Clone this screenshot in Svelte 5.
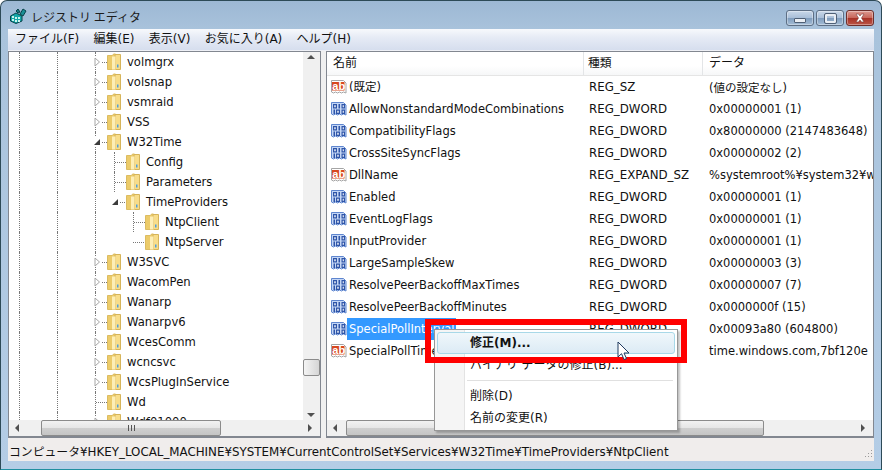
<script>
	const treeRows = [
		{ name: 'volmgrx', level: 4, kind: 'closed', guides: [0, 2] },
		{ name: 'volsnap', level: 4, kind: 'closed', guides: [0, 2] },
		{ name: 'vsmraid', level: 4, kind: 'closed', guides: [0, 2] },
		{ name: 'VSS', level: 4, kind: 'closed', guides: [0, 2] },
		{ name: 'W32Time', level: 4, kind: 'open', guides: [0, 2] },
		{ name: 'Config', level: 5, kind: 'leaf', guides: [0, 2, 4] },
		{ name: 'Parameters', level: 5, kind: 'leaf', guides: [0, 2, 4] },
		{ name: 'TimeProviders', level: 5, kind: 'open', guides: [0, 2, 4], last: true },
		{ name: 'NtpClient', level: 6, kind: 'leaf', guides: [0, 2, 4] },
		{ name: 'NtpServer', level: 6, kind: 'leaf', guides: [0, 2, 4], last: true },
		{ name: 'W3SVC', level: 4, kind: 'closed', guides: [0, 2] },
		{ name: 'WacomPen', level: 4, kind: 'closed', guides: [0, 2] },
		{ name: 'Wanarp', level: 4, kind: 'closed', guides: [0, 2] },
		{ name: 'Wanarpv6', level: 4, kind: 'closed', guides: [0, 2] },
		{ name: 'WcesComm', level: 4, kind: 'closed', guides: [0, 2] },
		{ name: 'wcncsvc', level: 4, kind: 'closed', guides: [0, 2] },
		{ name: 'WcsPlugInService', level: 4, kind: 'closed', guides: [0, 2] },
		{ name: 'Wd', level: 4, kind: 'leaf', guides: [0, 2] },
		{ name: 'Wdf01000', level: 4, kind: 'closed', guides: [0, 2] }
	];

	const values = [
		['ab', '(既定)', 'REG_SZ', '(値の設定なし)'],
		['bin', 'AllowNonstandardModeCombinations', 'REG_DWORD', '0x00000001 (1)'],
		['bin', 'CompatibilityFlags', 'REG_DWORD', '0x80000000 (2147483648)'],
		['bin', 'CrossSiteSyncFlags', 'REG_DWORD', '0x00000002 (2)'],
		['ab', 'DllName', 'REG_EXPAND_SZ', '%systemroot%¥system32¥w32time.dll'],
		['bin', 'Enabled', 'REG_DWORD', '0x00000001 (1)'],
		['bin', 'EventLogFlags', 'REG_DWORD', '0x00000001 (1)'],
		['bin', 'InputProvider', 'REG_DWORD', '0x00000001 (1)'],
		['bin', 'LargeSampleSkew', 'REG_DWORD', '0x00000003 (3)'],
		['bin', 'ResolvePeerBackoffMaxTimes', 'REG_DWORD', '0x00000007 (7)'],
		['bin', 'ResolvePeerBackoffMinutes', 'REG_DWORD', '0x0000000f (15)'],
		['bin', 'SpecialPollInterval', 'REG_DWORD', '0x00093a80 (604800)'],
		['ab', 'SpecialPollTimeRemaining', 'REG_MULTI_SZ', 'time.windows.com,7bf120e']
	];

	const menus = ['ファイル(F)', '編集(E)', '表示(V)', 'お気に入り(A)', 'ヘルプ(H)'];
	const cells = [0, 1, 2, 3, 4, 5];
</script>

<div class="window">
	<header class="titlebar">
		<svg class="app-icon" width="17" height="16" viewBox="0 0 17 16" aria-hidden="true">
			<path d="M.5 8 6 5l6 3v5l-6 2.500L.5 13z" fill="#15a6a6" stroke="#08424a" />
			<path d="M2 8h2v2H2zM5 9h2v2H5zM2 11h2v2H2zM5 12h2v2H5zM8 9h2v2H8zM8 12h2v2H8z" fill="#c9f4ee" />
			<path d="m10 6 3-5 3 2-3 5z" fill="#1b8e94" stroke="#08424a" />
			<path d="m8 1 2 3-2 1-2-2z" fill="#17787f" stroke="#08424a" />
		</svg>
		<span class="title">レジストリ エディタ</span>
		<div class="controls">
			<span class="ctl"><i class="min"></i></span>
			<span class="ctl"><i class="max"></i></span>
			<span class="ctl close">
				<svg width="14" height="10" viewBox="0 0 14 10" aria-hidden="true">
					<path d="M3 1h2.500L7 3l1.500-2H11L8.500 5 11 9H8.500L7 7 5.500 9H3l2.500-4z" fill="#fff" stroke="#7b3a36" stroke-width="0.6" />
				</svg>
			</span>
		</div>
	</header>

	<div class="client">
		<nav class="menubar">
			{#each menus as menu}
				<span>{menu}</span>
			{/each}
		</nav>

		<div class="panes">
			<section class="pane tree-pane">
				<div class="tree-body">
					<div class="tree">
						{#each treeRows as row}
							<div class="tree-row">
								<span class="lead"></span>
								{#each cells.slice(0, row.level) as c}
									<span class="cell" class:guide={row.guides.includes(c)}></span>
								{/each}
								<span class="cell node" class:last={row.last}>
									<span class="hline"></span>
									{#if row.kind === 'closed'}
										<svg class="twist" width="7" height="10" viewBox="0 0 7 10" aria-hidden="true">
											<path d="M1 1v8l4.500-4z" fill="#fff" stroke="#a6a6a6" />
										</svg>
									{:else if row.kind === 'open'}
										<svg class="twist" width="7" height="10" viewBox="0 0 7 10" aria-hidden="true">
											<path d="M0 8h6V2z" fill="#3c3c3c" />
										</svg>
									{/if}
								</span>
								<svg class="folder" width="14" height="18" viewBox="0 0 14 18" aria-hidden="true">
									<path d="M.5 2.500h5l1-1.500h2v15.500h-8z" fill="#eccb6a" stroke="#dcbc62" />
									<path d="M8 1.500h5.500v15h-5z" fill="#f8dd8a" stroke="#d6b45a" />
									<path d="M5 3.500h3.500v13H5z" fill="#fdeeb6" />
									<path d="M10 11.500h1.500v3H10z" fill="#4f9fdc" />
								</svg>
								<span class="tree-label">{row.name}</span>
							</div>
						{/each}
					</div>
					<div class="vbar">
						<span class="arrow up"></span>
						<span class="vthumb"></span>
						<span class="arrow down"></span>
					</div>
				</div>
				<div class="hbar tree-hbar">
					<span class="arrow left"></span>
					<span class="hthumb"><b class="grip"></b></span>
					<span class="arrow right"></span>
				</div>
			</section>

			<section class="pane list-pane">
				<div class="list">
					<div class="list-head">
						<span class="col-name">名前</span>
						<span class="col-type">種類</span>
						<span class="col-data">データ</span>
					</div>
					{#each values as [icon, name, type, data]}
						<div class="list-row">
							<span class="col-name">
								{#if icon === 'ab'}
									<svg class="val-icon" width="16" height="16" viewBox="0 0 16 16" aria-hidden="true">
										<path d="M.5 1.500h12l2.500 2.500v10l-2.500-1-2 1-2-1-2 1-2-1-2 1-2-1z" fill="#fff" stroke="#a5a5a5" />
										<path d="M1 3h12.500v8.500H1z" fill="#d8481f" />
										<text x="1.300" y="10.500" class="ab">ab</text>
									</svg>
								{:else}
									<svg class="val-icon" width="16" height="16" viewBox="0 0 16 16" aria-hidden="true">
										<path d="M.5 1.500h12l2.500 2.500v10l-2.500-1-2 1-2-1-2 1-2-1-2 1-2-1z" fill="#c4d6f5" stroke="#5f86cf" />
										<path d="M2 3h4v4.500H2zM7.500 3h1.500v4.500H7.500zM10.500 3h3.500v4.500h-3.500zM2.500 8.500H4V13H2.500zM5 8.500h4V13H5zM10.500 8.500h3.500V13h-3.500z" fill="#2f55a8" />
										<path d="M3.300 4.200h1.400v2.100H3.300zM11.700 4.200h1.100v2.100h-1.100zM6.300 9.700h1.400v2.100H6.300zM11.700 9.700h1.100v2.100h-1.100z" fill="#fff" />
									</svg>
								{/if}
								<span class="val-name" class:selected={name === 'SpecialPollInterval'}>{name}</span>
							</span>
							<span class="col-type">{type}</span>
							<span class="col-data">{data}</span>
						</div>
					{/each}
				</div>
				<div class="hbar list-hbar">
					<span class="arrow left"></span>
					<span class="hthumb"><b class="grip"></b></span>
					<span class="arrow right"></span>
				</div>
			</section>
		</div>

		<footer class="status">
			<span>コンピュータ¥HKEY_LOCAL_MACHINE¥SYSTEM¥CurrentControlSet¥Services¥W32Time¥TimeProviders¥NtpClient</span>
			<svg class="sizer" width="10" height="10" viewBox="0 0 10 10" aria-hidden="true">
				<path d="M8 1h1v1H8zM5 4h1v1H5zM8 4h1v1H8zM2 7h1v1H2zM5 7h1v1H5zM8 7h1v1H8z" fill="#9a9a9a" />
			</svg>
		</footer>
	</div>

	<div class="context-menu">
		<div class="item hover"><strong>修正(M)...</strong></div>
		<div class="item">バイナリ データの修正(B)...</div>
		<div class="sep"></div>
		<div class="item">削除(D)</div>
		<div class="item">名前の変更(R)</div>
	</div>
	<div class="callout"></div>
	<svg class="cursor" width="14" height="20" viewBox="0 0 14 20" aria-hidden="true">
		<path d="M1 1v15l3.500-3.300L7 18.500l2.500-1-2.500-5.500h5z" fill="#fff" stroke="#1f3a5f" />
	</svg>
</div>

<style>
	:global(body) {
		margin: 0;
		background: #fff;
	}

	.window {
		position: relative;
		width: 882px;
		height: 470px;
		box-sizing: border-box;
		padding: 0 7px 8px;
		border: 1px solid #2d4a57;
		border-bottom-color: #1f8fa0;
		border-radius: 7px 7px 0 0;
		background: linear-gradient(180deg, #9db8d4 0, #a9c3dc 30px, #b4cde6 100%);
		font-family: "DejaVu Sans", "Noto Sans CJK JP", sans-serif;
		font-size: 11.6px;
		color: #111;
		overflow: hidden;
		display: flex;
		flex-direction: column;
	}

	.titlebar {
		display: flex;
		align-items: center;
		height: 28px;
		flex: none;
	}

	.app-icon {
		margin: 2px 4px 0 2px;
	}

	.title {
		font-size: 12px;
		word-spacing: -1px;
		color: #1c1c1c;
		padding-top: 2px;
	}

	.controls {
		margin-left: auto;
		display: flex;
		gap: 2px;
		align-self: flex-start;
		margin-top: 9px;
	}

	.ctl {
		display: flex;
		align-items: center;
		justify-content: center;
		width: 28px;
		height: 16px;
		box-sizing: border-box;
		border: 1px solid #5d6f85;
		border-radius: 3px;
		background: linear-gradient(180deg, #c9d8e9 0, #a9bfd8 48%, #7f9dbe 52%, #a4bdd6 100%);
		box-shadow: inset 0 0 0 1px rgba(255, 255, 255, 0.35);
	}

	.ctl.close {
		border-color: #6e2f2b;
		background: linear-gradient(180deg, #dc9a90 0, #c8675b 48%, #a83226 52%, #bb5648 100%);
	}

	.min {
		width: 10px;
		height: 3px;
		margin-top: 4px;
		background: #e9eef4;
		border: 1px solid #4f6076;
		border-radius: 1px;
	}

	.max {
		width: 7px;
		height: 5px;
		border: 2px solid #e9eef4;
		outline: 1px solid #4f6076;
		border-radius: 1px;
	}

	.client {
		flex: 1;
		min-height: 0;
		display: flex;
		flex-direction: column;
		background: #fff;
	}

	.menubar {
		display: flex;
		gap: 14.3px;
		height: 22px;
		flex: none;
		align-items: center;
		box-sizing: border-box;
		padding: 0 0 4px 7px;
		font-size: 12px;
		background: linear-gradient(180deg, #f7f9fc 0, #e6ebf5 40%, #d6deee 100%);
		border-bottom: 1px solid #eef0f6;
	}

	.panes {
		flex: 1;
		min-height: 0;
		display: flex;
		gap: 5px;
		background: #f0f0f0;
	}

	.pane {
		box-sizing: border-box;
		display: flex;
		flex-direction: column;
		border: 1px solid #828790;
		border-bottom-width: 2px;
		background: #fff;
		min-width: 0;
	}

	.tree-pane {
		width: 313px;
		flex: none;
	}

	.list-pane {
		flex: 1;
	}

	.tree-body {
		flex: 1;
		min-height: 0;
		display: flex;
		overflow: hidden;
	}

	.tree {
		flex: 1;
		min-width: 0;
		overflow: hidden;
	}

	.tree-row {
		display: flex;
		align-items: center;
		height: 20px;
	}

	.lead {
		width: 10px;
		flex: none;
	}

	.cell {
		position: relative;
		flex: none;
		width: 19px;
		height: 20px;
		box-sizing: border-box;
	}

	.guide,
	.node {
		border-left: 1px dotted #777;
	}

	.node.last {
		border-left: 0;
	}

	.hline {
		position: absolute;
		left: 0;
		top: 10px;
		width: 11px;
		border-top: 1px dotted #777;
	}

	.twist {
		position: absolute;
		left: -2px;
		top: 5px;
		background: #fff;
	}

	.folder {
		flex: none;
		margin-left: -7px;
		position: relative;
	}

	.tree-label {
		margin-left: 6px;
		white-space: nowrap;
	}

	.vbar {
		width: 17px;
		flex: none;
		background: #f0f0f0;
		position: relative;
	}

	.vthumb {
		position: absolute;
		top: 307px;
		left: 0;
		width: 15px;
		height: 15px;
		border: 1px solid #8b8b8b;
		border-radius: 2px;
		background: linear-gradient(90deg, #f4f4f4, #d5d5d5);
	}

	.hbar {
		position: relative;
		height: 16px;
		flex: none;
		background: #f0f0f0;
	}

	.hthumb {
		position: absolute;
		top: 0;
		height: 14px;
		border: 1px solid #8b8b8b;
		border-radius: 2px;
		background: linear-gradient(180deg, #f2f2f2, #e6e6e6 48%, #cfcfcf 52%, #c5c5c5);
		display: flex;
		align-items: center;
		justify-content: center;
	}

	.tree-hbar .hthumb {
		left: 32px;
		width: 178px;
	}

	.list-hbar .hthumb {
		left: 19px;
		width: 416px;
	}

	.grip {
		width: 7px;
		height: 6px;
		background: repeating-linear-gradient(90deg, #555 0 1px, transparent 1px 3px);
	}

	.arrow {
		position: absolute;
		width: 0;
		height: 0;
		border: 4px solid transparent;
	}

	.arrow.up {
		top: 3px;
		left: 4px;
		border-top: 0;
		border-bottom-color: #505050;
	}

	.arrow.down {
		bottom: 3px;
		left: 4px;
		border-bottom: 0;
		border-top-color: #505050;
	}

	.arrow.left {
		left: 6px;
		top: 4px;
		border-left: 0;
		border-right-color: #505050;
	}

	.arrow.right {
		right: 8px;
		top: 4px;
		border-right: 0;
		border-left-color: #505050;
	}

	.list {
		flex: 1;
		min-height: 0;
		overflow: hidden;
		font-size: 11.5px;
	}

	.list-head {
		display: flex;
		align-items: center;
		height: 23px;
		font-size: 12px;
		background: linear-gradient(180deg, #fff, #fff 60%, #f6f7f8);
		border-bottom: 1px solid #e5e5e5;
	}

	.list-head .col-name {
		padding-left: 6px;
		border-right: 1px solid #e3e5e7;
	}

	.list-head .col-type {
		padding-left: 4px;
		border-right: 1px solid #e3e5e7;
	}

	.list-head span {
		height: 23px;
		line-height: 23px;
		box-sizing: border-box;
	}

	.col-name {
		display: flex;
		align-items: center;
		width: 257px;
		flex: none;
		box-sizing: border-box;
		overflow: hidden;
		white-space: nowrap;
	}

	.col-type {
		width: 119px;
		flex: none;
		box-sizing: border-box;
		padding-left: 5px;
		overflow: hidden;
		white-space: nowrap;
		font-size: 11.8px;
	}

	.col-data {
		flex: 1;
		min-width: 0;
		padding-left: 6px;
		overflow: hidden;
		white-space: nowrap;
	}

	.list-row {
		display: flex;
		align-items: center;
		height: 22px;
	}

	.val-icon {
		flex: none;
		margin: 0 0 0 4px;
	}

	.ab {
		font-family: "Liberation Sans", sans-serif;
		font-size: 11px;
		font-weight: 700;
		fill: #fff;
	}

	.val-name {
		padding: 0 2px;
		line-height: 22px;
	}

	.val-name.selected {
		background: #3399ff;
		color: #fff;
	}

	.status {
		flex: none;
		display: flex;
		align-items: center;
		justify-content: space-between;
		height: 23px;
		box-sizing: border-box;
		padding: 1px 0 0 1px;
		font-size: 11.85px;
		background: #f0edec;
	}

	.sizer {
		margin: 8px 1px 0 0;
	}

	.context-menu {
		position: absolute;
		left: 433px;
		top: 328px;
		width: 244px;
		height: 102px;
		box-sizing: border-box;
		padding: 2px;
		font-size: 12px;
		background: linear-gradient(90deg, #f5f5f5 0 29px, #e3e3e3 29px 30px, #fff 30px 31px, #fff);
		border: 1px solid #979797;
		box-shadow: 2px 2px 2px rgba(0, 0, 0, 0.25);
	}

	.item {
		height: 22px;
		line-height: 22px;
		padding-left: 33px;
		white-space: nowrap;
	}

	.item.hover {
		box-sizing: border-box;
		border: 1px solid #a8d8e8;
		border-radius: 3px;
		background: linear-gradient(180deg, #f0f7fb, #dcebf5);
		line-height: 20px;
		padding-left: 32px;
	}

	.sep {
		height: 1px;
		margin: 4px 2px 4px 30px;
		background: #e0e0e0;
	}

	.callout {
		position: absolute;
		left: 424px;
		top: 318px;
		width: 262px;
		height: 44px;
		box-sizing: border-box;
		border: 6px solid #ff0000;
	}

	.cursor {
		position: absolute;
		left: 616px;
		top: 340px;
	}
</style>
